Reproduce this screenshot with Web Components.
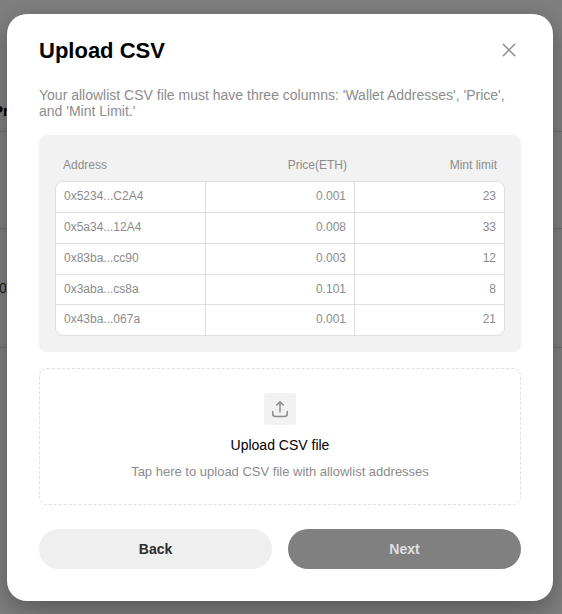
<!DOCTYPE html>
<html lang="en">
<head>
<meta charset="utf-8">
<title>Upload CSV</title>
<style>
html,body{margin:0;height:100%;overflow:hidden}
body{font-family:"Liberation Sans",Arial,sans-serif;background:#808080;color:#8c8c8c}
</style>
</head>
<body>
<upload-page></upload-page>
<script>
function define(name, html, setup) {
  customElements.define(name, class extends HTMLElement {
    connectedCallback() {
      if (this.shadowRoot) return;
      this.attachShadow({mode: 'open'}).innerHTML = html;
      if (setup) setup(this, this.shadowRoot);
    }
  });
}

define('page-backdrop', `
<style>
:host{position:absolute;inset:0;display:grid;grid-template-rows:131px 96px 118px 1fr;overflow:hidden;row-gap:1px;
 background:linear-gradient(#717171,#717171) 0 131px/100% 1px no-repeat,linear-gradient(#717171,#717171) 0 228px/100% 1px no-repeat,linear-gradient(#717171,#717171) 0 347px/100% 1px no-repeat,#808080}
div{display:flex;align-items:center;white-space:nowrap}
.h{color:#000;font:bold 15px "Liberation Sans",sans-serif;align-items:flex-end;padding-bottom:12px;margin-left:-7px}
.n{color:#1a1a1a;font-size:14px;margin-left:-1px}
</style>
<div class="h">Pr</div><div></div><div class="n">0</div><div></div>`);

define('close-icon', `
<style>:host{display:block;width:14px;height:14px;margin-bottom:1px}svg{display:block}</style>
<svg width="14" height="14" viewBox="0 0 14 14" fill="none" stroke="#8c8c8c" stroke-width="1.5" stroke-linecap="round"><path d="M1.3 1.3 12.7 12.7M12.7 1.3 1.3 12.7"/></svg>`);

define('upload-icon', `
<style>:host{display:flex;width:32px;height:32px;border-radius:3px;background:#f2f2f2;align-items:center;justify-content:center}</style>
<svg width="20" height="20" viewBox="0 0 20 20" fill="none" stroke="#8c8c8c" stroke-width="1.5" stroke-linecap="round" stroke-linejoin="round"><path d="M10 13V2.8M6.7 6 10 2.8 13.3 6M2.7 12.4V14.4Q2.7 17.5 5.8 17.5H14.2Q17.3 17.5 17.3 14.4V12.4"/></svg>`);

define('csv-table', `
<style>
:host{display:block;box-sizing:border-box;height:217px;padding:16px;background:#f2f2f2;border-radius:8px;font-size:12px;line-height:14px}
.row{display:grid;grid-template-columns:149px 148px 1fr;column-gap:1px}
.row>:not(:first-child){text-align:right}
.head{height:30px;padding:0 8px 3px;box-sizing:border-box;align-items:center;grid-template-columns:142px 141px 1fr}
.body{box-sizing:border-box;height:155px;border:1px solid #dfdfdf;border-radius:8px;background:#dfdfdf;display:grid;grid-template-rows:30px 30px 30px 29px 30px;row-gap:1px;overflow:hidden}
.body span{background:#fff;padding:7px 8px 0}
</style>
<div class="row head"><span>Address</span><span>Price(ETH)</span><span>Mint limit</span></div>
<div class="body"></div>`, (host, root) => {
  const data = [['0x5234...C2A4','0.001','23'],['0x5a34...12A4','0.008','33'],['0x83ba...cc90','0.003','12'],['0x3aba...cs8a','0.101','8'],['0x43ba...067a','0.001','21']];
  root.querySelector('.body').innerHTML = data.map(r => '<div class="row">' + r.map(c => `<span>${c}</span>`).join('') + '</div>').join('');
});

define('drop-zone', `
<style>
:host{display:flex;flex-direction:column;align-items:center;box-sizing:border-box;height:137px;padding-top:24px;border:1px dashed #dfdfdf;border-radius:8px}
.t{color:#000;font-size:14px;line-height:16px;margin-top:12px}
.s{font-size:13px;line-height:16px;margin-top:11px}
</style>
<upload-icon></upload-icon><span class="t">Upload CSV file</span><span class="s">Tap here to upload CSV file with allowlist addresses</span>`);

define('pill-button', `
<style>
:host{display:block;flex:1}
button{all:unset;display:flex;width:100%;height:40px;align-items:center;justify-content:center;border-radius:20px;background:#efefef;color:#2c2c2c;font-weight:bold;font-size:14px}
:host([primary]) button{background:#808080;color:#dedfe3}
</style>
<button><slot></slot></button>`);

define('modal-dialog', `
<style>
:host{position:absolute;left:7px;top:14px;width:546px;height:587px;box-sizing:border-box;padding:24px 32px 32px;background:#fff;border-radius:20px;box-shadow:0 8px 28px rgba(0,0,0,.34);display:flex;flex-direction:column}
header{display:flex;justify-content:space-between;align-items:center;height:25px;padding-right:5px}
h1{margin:0;font-size:22px;line-height:25px;color:#000}
p{margin:24px 0 16px;font-size:14px;line-height:16px}
drop-zone{margin-top:16px}
footer{display:flex;gap:16px;margin-top:24px}
</style>
<header><h1>Upload CSV</h1><close-icon></close-icon></header>
<p>Your allowlist CSV file must have three columns: 'Wallet Addresses', 'Price', and 'Mint Limit.'</p>
<csv-table></csv-table>
<drop-zone></drop-zone>
<footer><pill-button>Back</pill-button><pill-button primary>Next</pill-button></footer>`);

define('upload-page', `
<style>:host{display:block;position:relative;width:562px;height:614px;overflow:hidden}</style>
<page-backdrop></page-backdrop><modal-dialog></modal-dialog>`);
</script>
</body>
</html>
